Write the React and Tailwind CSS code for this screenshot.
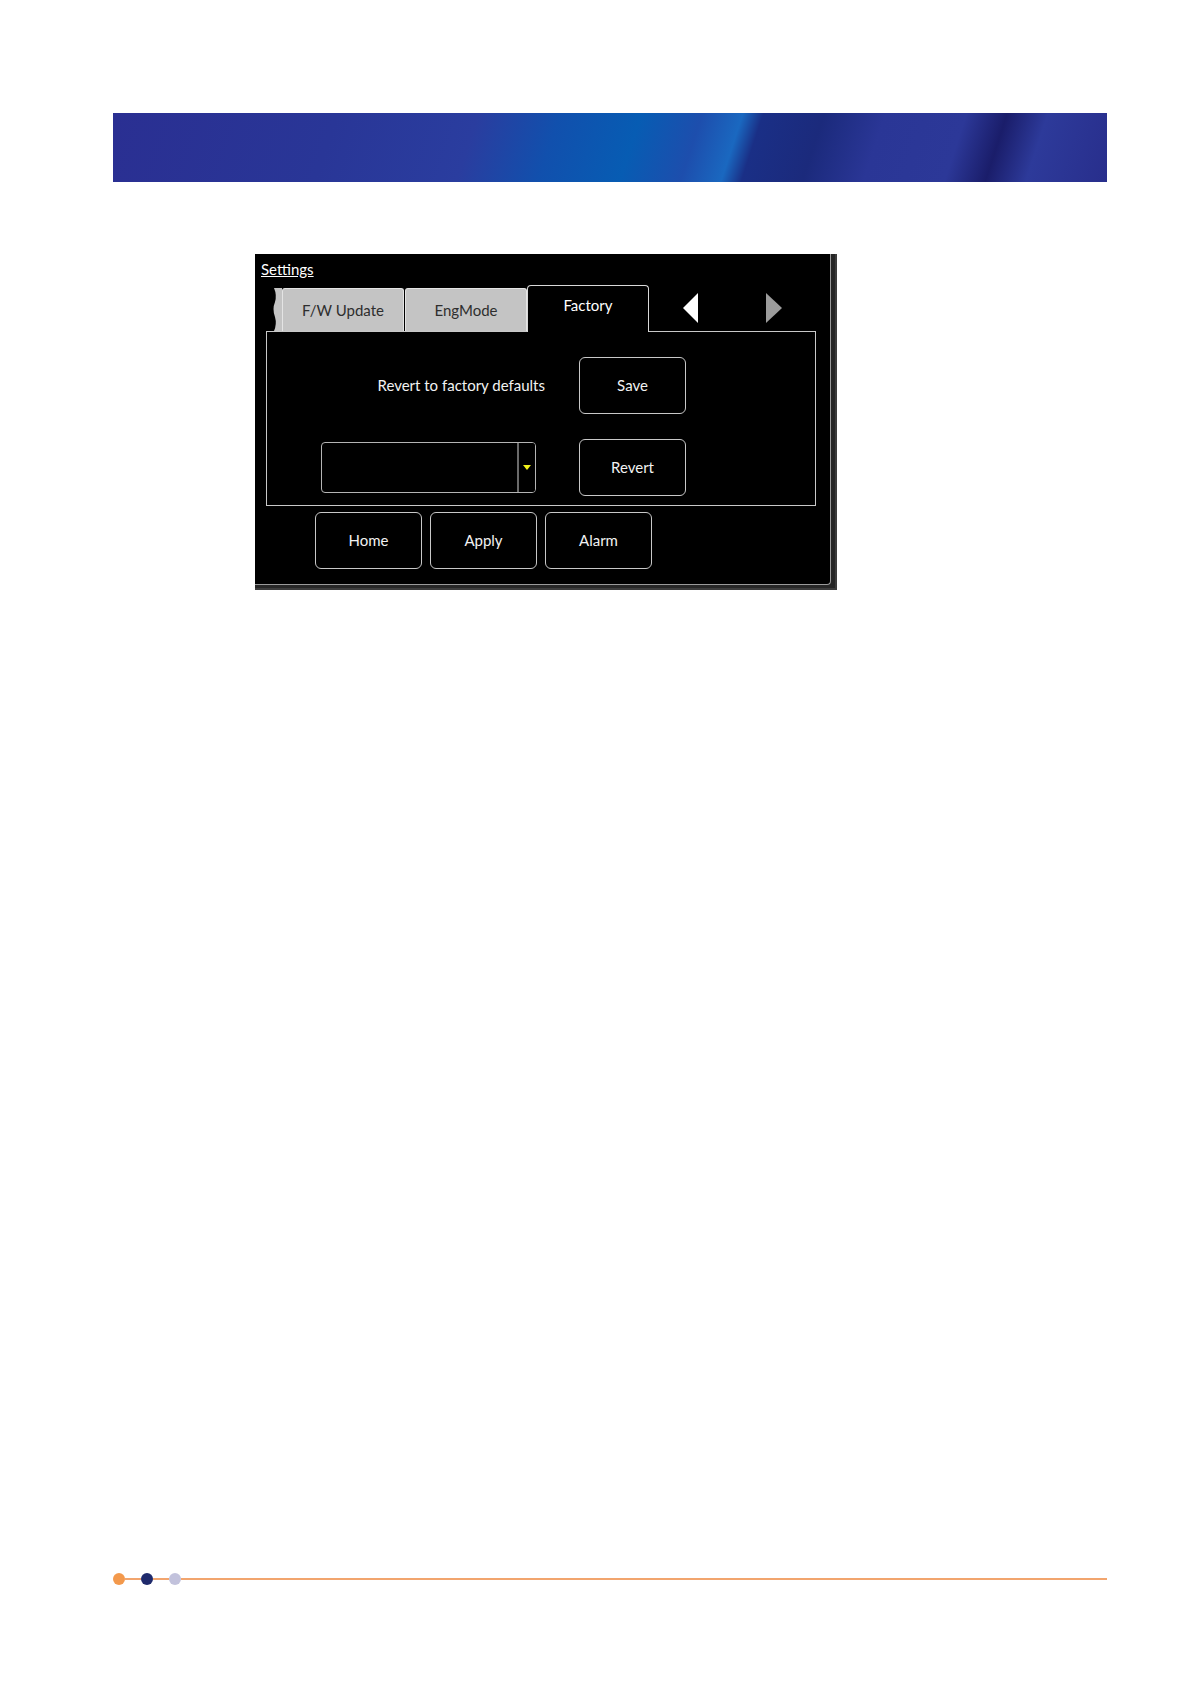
const font = { fontFamily: "Lato, 'Noto Sans', 'Liberation Sans', sans-serif" };

const Btn = ({ children }) => (
  <div className="w-[107px] h-[57px] rounded-[6px] border border-[#c8c8c8] flex items-center justify-center text-[15px] text-[#f2f2f2]">
    {children}
  </div>
);

const Banner = () => (
  <div className="ml-[113px] mt-[113px] w-[994px] h-[69px] bg-[linear-gradient(108deg,#2a2f92_0%,#293697_22%,#2a3d9f_36%,#1150ad_44%,#075cb3_52%,#1d4ead_58%,#1a68c0_62%,#1a2f86_64%,#1b2a7c_70%,#2a3696_76%,#2c3898_84%,#1a1d6a_88%,#2d3a9a_92%,#282e8c_100%)]" />
);

const Window = () => (
  <div className="ml-[255px] mt-[72px] w-[582px] h-[336px] bg-[#262626] border-r-[2px] border-b-[2px] border-[#3c3c3c]">
    <div className="w-[576px] h-[331px] bg-black border-r border-b border-[#9a9a9a] rounded-br-[4px] flex flex-col">
      <div className="pl-[6px] pt-[6px] h-[34px] text-[15px] leading-[18px] text-white underline" style={font}>Settings</div>

      {/* tab strip */}
      <div className="flex items-end ml-[17px] h-[43px] relative z-10" style={font}>
        <svg width="10" height="43" viewBox="0 0 10 43" className="block">
          <path d="M2 0 L10 0 L10 43 L2 43 Q5 36 3 29 Q0 21 3 14 Q5 7 2 0 Z" fill="#c4c4c4" />
        </svg>
        <div className="w-[122px] h-[43px] bg-[#c4c4c4] border-t border-x border-[#e4e4e4] rounded-t-[3px] flex items-center justify-center text-[15px] text-[#2e2e2e]">F/W Update</div>
        <div className="w-[122px] h-[43px] ml-px bg-[#c4c4c4] border-t border-x border-[#e4e4e4] rounded-t-[3px] flex items-center justify-center text-[15px] text-[#2e2e2e]">EngMode</div>
        <div className="w-[122px] h-[47px] -mb-px bg-black border-t border-x border-[#d8d8d8] rounded-t-[4px] flex items-center justify-center pb-[7px] text-[15px] text-white">Factory</div>
        <div className="self-center flex items-center ml-[34px] mt-[-4px] gap-[68px]">
          <svg width="15" height="30" viewBox="0 0 15 30"><path d="M15 0 L0 15 L15 30 Z" fill="#ffffff" /></svg>
          <svg width="16" height="30" viewBox="0 0 16 30"><path d="M0 0 L16 15 L0 30 Z" fill="#9c9c9c" /></svg>
        </div>
      </div>

      {/* panel */}
      <div className="ml-[11px] w-[550px] h-[175px] border border-[#c8c8c8] flex flex-col pt-[25px]" style={font}>
        <div className="flex items-center">
          <div className="w-[312px] pr-[34px] text-right text-[15px] text-[#f2f2f2]">Revert to factory defaults</div>
          <Btn>Save</Btn>
        </div>
        <div className="flex items-center mt-[25px]">
          <div className="w-[312px] pl-[54px]">
            <div className="w-[215px] h-[51px] rounded-[4px] border border-[#b4b4b4] flex justify-end">
              <div className="w-[18px] h-full border-l-2 border-[#6a6a6a] bg-black rounded-r-[3px] flex items-center justify-center">
                <svg width="8" height="5" viewBox="0 0 8 5"><path d="M0 0 L8 0 L4 5 Z" fill="#f2f21a" /></svg>
              </div>
            </div>
          </div>
          <Btn>Revert</Btn>
        </div>
      </div>

      {/* bottom buttons */}
      <div className="flex gap-[8px] ml-[60px] mt-[6px]" style={font}>
        <Btn>Home</Btn>
        <Btn>Apply</Btn>
        <Btn>Alarm</Btn>
      </div>
    </div>
  </div>
);

const Footer = () => (
  <div className="mt-auto mb-[99px] ml-[113px] w-[994px] flex items-center">
    <div className="w-[12px] h-[12px] rounded-full bg-[#f3994c]" />
    <div className="w-[16px] h-[2px] bg-[#f2a56e]" />
    <div className="w-[12px] h-[12px] rounded-full bg-[#1f2a6c]" />
    <div className="w-[16px] h-[2px] bg-[#f2a56e]" />
    <div className="w-[12px] h-[12px] rounded-full bg-[#c2c2dc]" />
    <div className="flex-1 h-[2px] bg-[#f2a56e]" />
  </div>
);

export default function App() {
  return (
    <div className="w-[1190px] min-h-[1684px] bg-white flex flex-col">
      <Banner />
      <Window />
      <Footer />
    </div>
  );
}
